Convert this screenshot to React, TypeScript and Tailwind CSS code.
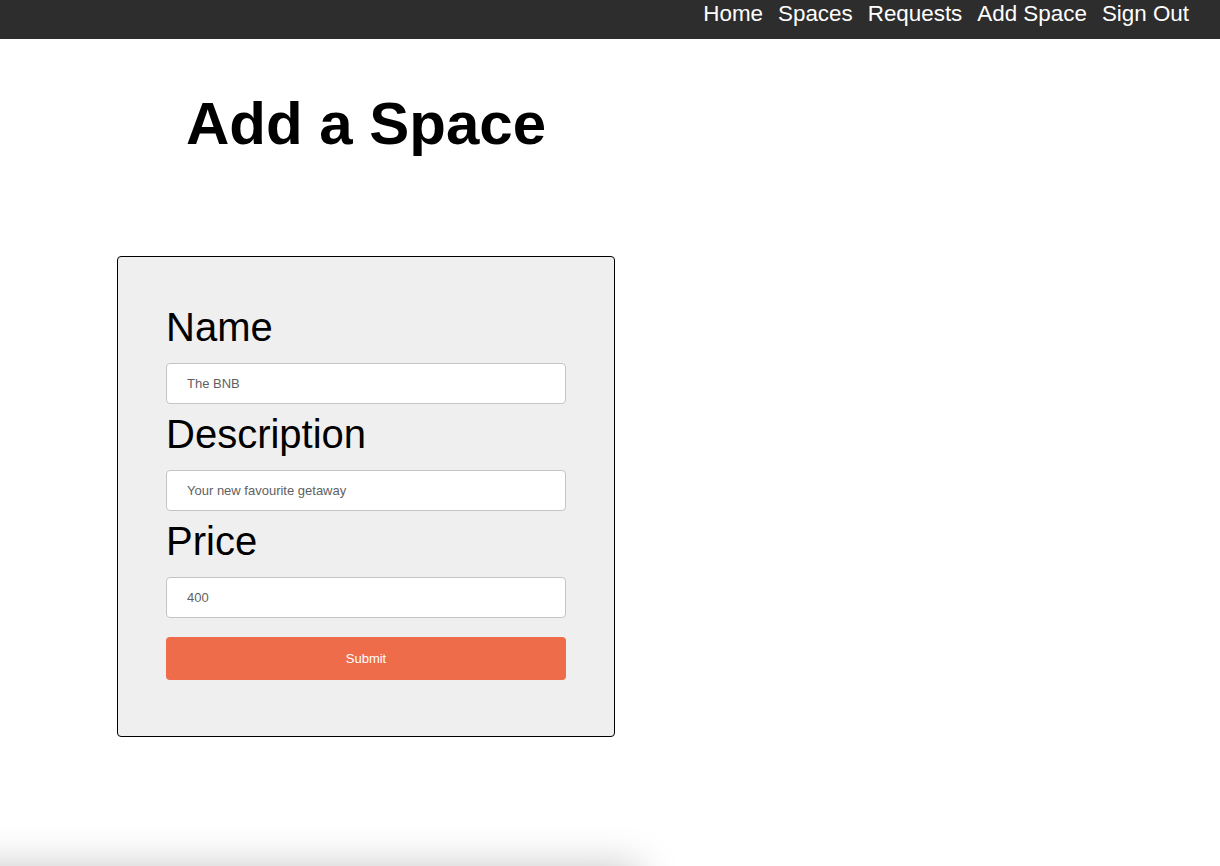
import React from "react";

export default function App() {
  const fields = [
    { label: "Name", ph: "The BNB" },
    { label: "Description", ph: "Your new favourite getaway" },
    { label: "Price", ph: "400" },
  ];
  return (
    <div
      className="h-[866px] overflow-hidden bg-white flex flex-col"
      style={{ fontFamily: '"Liberation Sans", Arial, Helvetica, sans-serif' }}
    >
      <nav className="h-[39px] shrink-0 bg-[#2d2d2d] flex justify-end items-start pr-[31px] pt-[1px]">
        <ul className="flex gap-[15px] text-[22.4px] leading-[26px] text-white">
          <li>Home</li>
          <li>Spaces</li>
          <li>Requests</li>
          <li>Add Space</li>
          <li>Sign Out</li>
        </ul>
      </nav>
      <main className="ml-[117px] w-[498px] shrink-0 flex flex-col">
        <h1 className="mt-[50px] text-center text-[60px] leading-[69px] font-bold text-black">
          Add a Space
        </h1>
        <form
          className="mt-[98px] border border-black rounded-[4px] bg-[#efefef] px-[48px] pt-[47px] pb-[56px] flex flex-col"
          onSubmit={(e) => e.preventDefault()}
        >
          {fields.map((f, i) => (
            <div key={f.label} className={i > 0 ? "mt-[7px] flex flex-col" : "flex flex-col"}>
              <label className="text-[40px] leading-[46px] text-black">{f.label}</label>
              <input
                placeholder={f.ph}
                className="mt-[13px] h-[41px] w-full bg-white border border-[#c4c4c4] rounded-[4px] pl-[20px] text-[13px] text-[#555] placeholder:text-[#5f5f5f] outline-none"
              />
            </div>
          ))}
          <button
            type="submit"
            className="mt-[19px] h-[43px] w-full rounded-[4px] bg-[#ee6c4a] text-white text-[13px]"
          >
            Submit
          </button>
        </form>
      </main>
      <div className="mt-[129px] ml-[-60px] w-[700px] h-[80px] shrink-0 bg-white shadow-[0_0_40px_rgba(0,0,0,0.22)]" />
    </div>
  );
}
